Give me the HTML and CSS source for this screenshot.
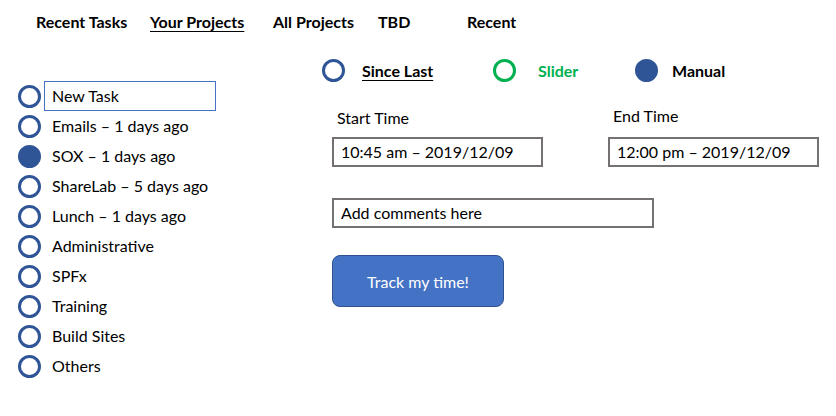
FILE: index.html
```html
<!DOCTYPE html>
<html lang="en">
<head>
<meta charset="utf-8">
<title>Time Tracker</title>
<link rel="stylesheet" href="styles.css">
</head>
<body>
<nav class="nav">
  <span class="nav-item w1">Recent Tasks</span>
  <span class="nav-item w2 active">Your Projects</span>
  <span class="nav-item w3">All Projects</span>
  <span class="nav-item w4">TBD</span>
  <span class="nav-item">Recent</span>
</nav>
<main class="main">
  <ul class="tasks">
    <li class="task"><span class="radio"></span><input class="new-task" type="text" value="New Task"></li>
    <li class="task"><span class="radio"></span><span class="task-label">Emails – 1 days ago</span></li>
    <li class="task"><span class="radio filled"></span><span class="task-label">SOX – 1 days ago</span></li>
    <li class="task"><span class="radio"></span><span class="task-label">ShareLab – 5 days ago</span></li>
    <li class="task"><span class="radio"></span><span class="task-label">Lunch – 1 days ago</span></li>
    <li class="task"><span class="radio"></span><span class="task-label">Administrative</span></li>
    <li class="task"><span class="radio"></span><span class="task-label">SPFx</span></li>
    <li class="task"><span class="radio"></span><span class="task-label">Training</span></li>
    <li class="task"><span class="radio"></span><span class="task-label">Build Sites</span></li>
    <li class="task"><span class="radio"></span><span class="task-label">Others</span></li>
  </ul>
  <section class="panel">
    <div class="modes">
      <div class="mode mode-since"><span class="radio"></span><span class="mode-label since">Since Last</span></div>
      <div class="mode mode-slider"><span class="radio green"></span><span class="mode-label slider">Slider</span></div>
      <div class="mode mode-manual"><span class="radio filled"></span><span class="mode-label manual">Manual</span></div>
    </div>
    <div class="form">
      <div class="times">
        <div class="field field-start">
          <label class="field-label start-label">Start Time</label>
          <div class="box time-box">10:45 am – 2019/12/09</div>
        </div>
        <div class="field field-end">
          <label class="field-label end-label">End Time</label>
          <div class="box time-box">12:00 pm – 2019/12/09</div>
        </div>
      </div>
      <div class="box comments">Add comments here</div>
      <button class="track" type="button">Track my time!</button>
    </div>
  </section>
</main>
</body>
</html>
```
FILE: styles.css
```css
* { box-sizing: border-box; }
body {
  margin: 0;
  font-family: Lato, "Open Sans", sans-serif;
  font-size: 16px;
  color: #000;
  background: #fff;
}
.nav {
  display: flex;
  align-items: center;
  height: 43px;
  padding-left: 36px;
  padding-bottom: 1px;
  font-weight: bold;
  font-size: 16px;
}
.nav-item { display: block; }
.nav-item.w1 { width: 114px; }
.nav-item.w2 { width: 123px; }
.nav-item.w3 { width: 105px; }
.nav-item.w4 { width: 89px; }
.nav-item.active { text-decoration: underline; text-underline-offset: 3px; }

.main {
  display: flex;
  align-items: flex-start;
}
.tasks {
  list-style: none;
  margin: 38px 0 0 0;
  padding: 0 0 0 18px;
  width: 322px;
  flex: none;
}
.task {
  display: flex;
  align-items: center;
  height: 30px;
  gap: 3px;
}
.radio {
  display: block;
  flex: none;
  width: 23px;
  height: 23px;
  border: 3px solid #2f5597;
  border-radius: 50%;
  background: #fff;
}
.radio.filled { background: #2f5597; }
.radio.green { border-color: #00b050; }
.task-label { padding-left: 8px; padding-bottom: 1px; }
.new-task {
  width: 172px;
  height: 30px;
  border: 1px solid #4472c4;
  padding: 0 0 1px 7px;
  font: inherit;
  font-size: 16px;
  color: #000;
  outline: none;
}

.panel {
  display: flex;
  flex-direction: column;
  align-items: flex-start;
  margin-top: 12px;
}
.modes {
  display: flex;
  align-items: center;
  height: 30px;
  font-weight: bold;
}
.mode { display: flex; align-items: center; }
.mode-since { width: 171px; }
.mode-slider { width: 142px; }
.mode-label.since { margin-left: 17px; text-decoration: underline; text-underline-offset: 3px; }
.mode-label.slider { margin-left: 22px; color: #00b050; }
.mode-label.manual { margin-left: 14px; }

.form {
  display: flex;
  flex-direction: column;
  align-items: flex-start;
  padding-left: 10px;
}
.times { display: flex; margin-top: 22px; }
.field { display: flex; flex-direction: column; }
.field-start { width: 276px; }
.field-label {
  display: block;
  line-height: 22px;
  padding-left: 5px;
}
.start-label { margin-bottom: 8px; }
.end-label { margin-top: -2px; margin-bottom: 10px; }
.box {
  height: 30px;
  border: 2px solid #767171;
  padding: 0 0 1px 7px;
  display: flex;
  align-items: center;
}
.time-box { width: 211px; }
.comments { width: 322px; margin-top: 31px; }
.track {
  margin-top: 27px;
  width: 172px;
  height: 52px;
  background: #4472c4;
  border: 1px solid #2f528f;
  border-radius: 8px;
  color: #fff;
  font: inherit;
  font-size: 16px;
  cursor: pointer;
}
```
